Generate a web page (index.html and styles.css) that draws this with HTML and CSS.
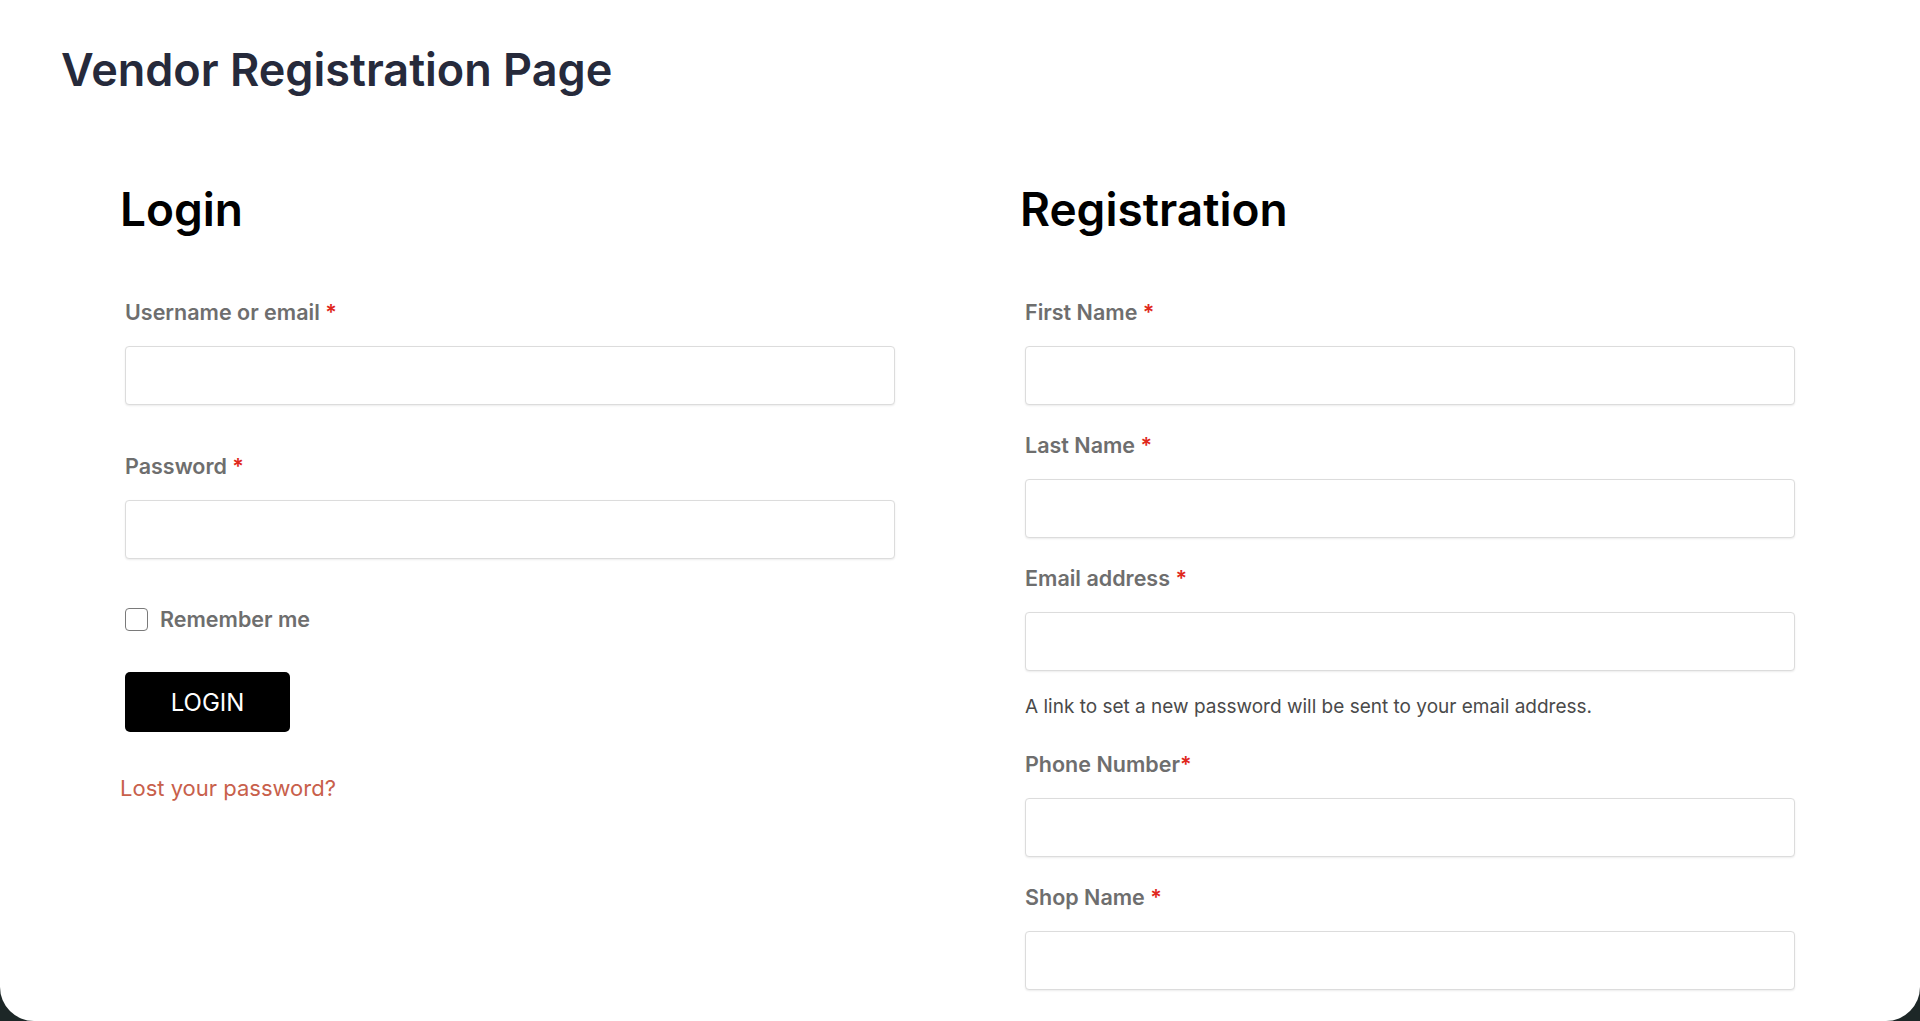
FILE: index.html
```html
<!DOCTYPE html>
<html lang="en">
<head>
    <meta charset="UTF-8">
    <meta name="viewport" content="width=device-width, initial-scale=1.0">
    <title>Vendor Registration Page</title>
    <link rel="stylesheet" href="styles.css">
</head>
<body>
    <div class="page">
        <h1 class="page-title">Vendor Registration Page</h1>

        <div class="columns">
            <section class="col">
                <h2>Login</h2>
                <form class="form login-form">
                    <div class="field">
                        <label for="username">Username or email <span class="required">*</span></label>
                        <input type="text" id="username">
                    </div>
                    <div class="field">
                        <label for="password">Password <span class="required">*</span></label>
                        <input type="password" id="password">
                    </div>
                    <label class="remember">
                        <input type="checkbox">
                        <span>Remember me</span>
                    </label>
                    <button type="submit" class="button">LOGIN</button>
                </form>
                <a href="#" class="lost-link">Lost your password?</a>
            </section>

            <section class="col">
                <h2>Registration</h2>
                <form class="form register-form">
                    <div class="field">
                        <label for="first_name">First Name <span class="required">*</span></label>
                        <input type="text" id="first_name">
                    </div>
                    <div class="field">
                        <label for="last_name">Last Name <span class="required">*</span></label>
                        <input type="text" id="last_name">
                    </div>
                    <div class="field">
                        <label for="email">Email address <span class="required">*</span></label>
                        <input type="email" id="email">
                    </div>
                    <p class="note">A link to set a new password will be sent to your email address.</p>
                    <div class="field">
                        <label for="phone">Phone Number<span class="required">*</span></label>
                        <input type="tel" id="phone">
                    </div>
                    <div class="field">
                        <label for="shop_name">Shop Name <span class="required">*</span></label>
                        <input type="text" id="shop_name">
                    </div>
                </form>
            </section>
        </div>
    </div>
</body>
</html>
```

FILE: styles.css
```css
body {
    font-family: Inter, "Noto Sans", sans-serif;
    margin: 0;
    padding: 0;
    background-color: #1d2727;
    overflow: hidden;
}
.page {
    background-color: #fff;
    height: 1021px;
    box-sizing: border-box;
    border-radius: 0 0 34px 34px;
    padding-top: 42px;
}
.page-title {
    margin: 0 0 0 61px;
    font-size: 45px;
    line-height: 56px;
    font-weight: 600;
    color: #262a3b;
}
.columns {
    display: grid;
    grid-template-columns: 1fr 1fr;
    gap: 116px;
    padding: 0 118px;
    margin-top: 83px;
}
.col h2 {
    margin: 0 0 61px 2px;
    font-size: 46px;
    line-height: 56px;
    font-weight: 600;
    color: #000;
}
.form {
    padding: 0 7px;
}
.field label {
    display: block;
    font-size: 21.5px;
    line-height: 28px;
    font-weight: 600;
    color: #6e6e6e;
    margin-bottom: 20px;
}
.required {
    color: #e0281c;
}
.field input {
    display: block;
    width: 100%;
    height: 59px;
    box-sizing: border-box;
    border: 1px solid #dcdcdc;
    border-radius: 4px;
    box-shadow: 0 1px 2px rgba(0, 0, 0, 0.08);
    font-family: inherit;
    font-size: 18px;
    padding: 0 14px;
}
.login-form .field {
    margin-bottom: 47px;
}
.register-form .field {
    margin-bottom: 26px;
}
.remember {
    display: flex;
    align-items: center;
    gap: 12px;
    font-size: 21.5px;
    line-height: 28px;
    font-weight: 600;
    color: #6e6e6e;
    margin-top: -1px;
}
.remember input {
    appearance: none;
    margin: 0;
    width: 23px;
    height: 23px;
    border: 1.5px solid #7a7a7a;
    border-radius: 4px;
    background: #fff;
}
.button {
    display: block;
    margin-top: 39px;
    width: 165px;
    height: 60px;
    background-color: #000;
    color: #fff;
    border: none;
    border-radius: 5px;
    font-family: inherit;
    font-size: 24px;
    font-weight: 400;
    cursor: pointer;
}
.lost-link {
    display: inline-block;
    margin: 42px 0 0 2px;
    font-size: 22px;
    line-height: 28px;
    color: #c8604b;
    text-decoration: none;
}
.note {
    margin: -3px 0 30px;
    font-size: 19px;
    line-height: 26px;
    color: #4a4a4a;
}
```
